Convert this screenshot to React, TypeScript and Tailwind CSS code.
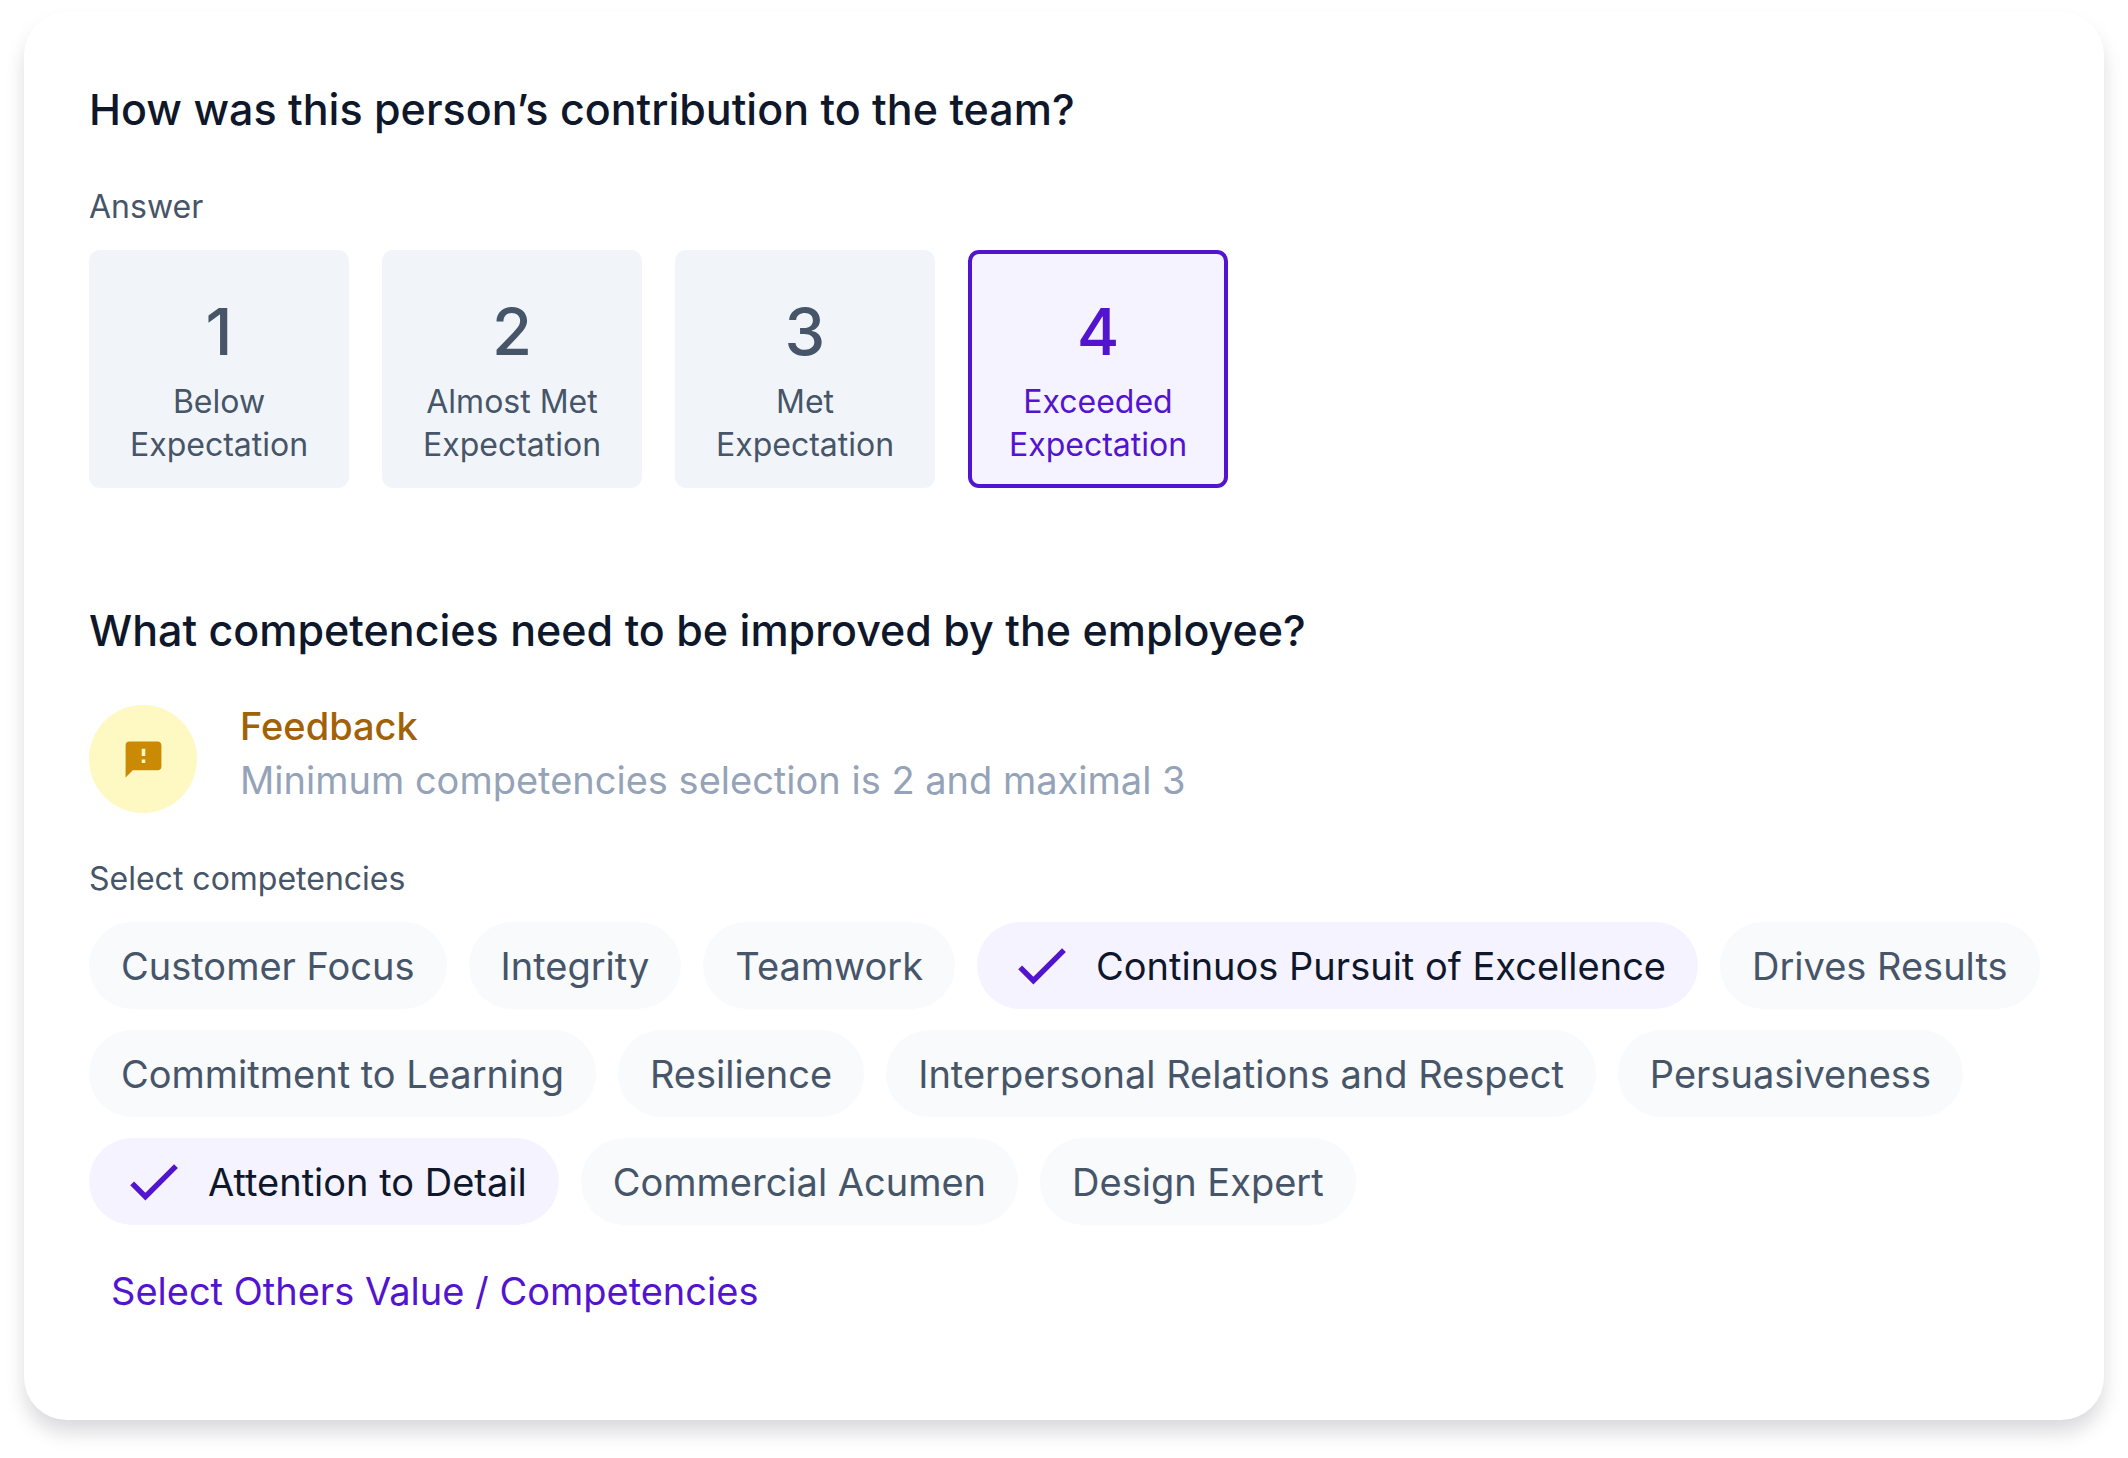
import { useState } from "react";
import { clsx } from "clsx";
import { MdCheck, MdFeedback } from "react-icons/md";

interface Rating {
  value: number;
  lines: [string, string];
}

const RATINGS: Rating[] = [
  { value: 1, lines: ["Below", "Expectation"] },
  { value: 2, lines: ["Almost Met", "Expectation"] },
  { value: 3, lines: ["Met", "Expectation"] },
  { value: 4, lines: ["Exceeded", "Expectation"] },
];

const COMPETENCIES = [
  "Customer Focus",
  "Integrity",
  "Teamwork",
  "Continuos Pursuit of Excellence",
  "Drives Results",
  "Commitment to Learning",
  "Resilience",
  "Interpersonal Relations and Respect",
  "Persuasiveness",
  "Attention to Detail",
  "Commercial Acumen",
  "Design Expert",
];

const MAX_SELECTION = 3;

function RatingTile({ rating, active, onSelect }: { rating: Rating; active: boolean; onSelect: () => void }) {
  return (
    <button
      type="button"
      aria-pressed={active}
      onClick={onSelect}
      className={clsx(
        "w-[260px] rounded-[11px] border-4 pt-[34px] pb-[18px] text-center",
        active
          ? "border-[#5314d0] bg-violet-50 text-[#5314d0]"
          : "border-[#f1f5f9] bg-[#f1f5f9] text-[#475569]"
      )}
    >
      <span className="block text-[65px] leading-[88px] font-medium">{rating.value}</span>
      <span className="mt-1 block text-[32px] leading-[43px]">
        {rating.lines[0]}
        <br />
        {rating.lines[1]}
      </span>
    </button>
  );
}

function CompetencyChip({ label, active, onToggle }: { label: string; active: boolean; onToggle: () => void }) {
  return (
    <button
      type="button"
      aria-pressed={active}
      onClick={onToggle}
      className={clsx(
        "flex h-[87px] items-center gap-[22px] rounded-full px-[32px] text-[38px] leading-[54px]",
        active ? "bg-violet-50 text-[#0f172a]" : "bg-[#f8fafc] text-[#475569]"
      )}
    >
      {active && <MdCheck className="size-[65px] text-[#5314d0]" />}
      {label}
    </button>
  );
}

export default function App() {
  const [rating, setRating] = useState(4);
  const [selected, setSelected] = useState<string[]>([
    "Continuos Pursuit of Excellence",
    "Attention to Detail",
  ]);

  function toggle(label: string) {
    setSelected((prev) => {
      if (prev.includes(label)) return prev.filter((item) => item !== label);
      if (prev.length >= MAX_SELECTION) return prev;
      return [...prev, label];
    });
  }

  return (
    <main className="bg-white px-6 pt-3 pb-[38px] font-['Inter',sans-serif] [font-optical-sizing:none]">
      <div className="rounded-[43px] bg-white pt-[65px] pr-14 pb-[86px] pl-[65px] shadow-[0_13px_20px_-1px_rgba(15,15,30,0.155)]">
        <section>
          <h2 className="text-[43px] leading-[65px] font-medium text-[#0f172a]">
            How was this person’s contribution to the team?
          </h2>
          <p className="mt-[43px] text-[32px] leading-[43px] text-[#475569]">Answer</p>
          <div className="mt-[22px] flex flex-wrap gap-[33px]">
            {RATINGS.map((item) => (
              <RatingTile
                key={item.value}
                rating={item}
                active={item.value === rating}
                onSelect={() => setRating(item.value)}
              />
            ))}
          </div>
        </section>

        <section className="mt-[110px]">
          <h2 className="text-[43px] leading-[65px] font-medium text-[#0f172a]">
            What competencies need to be improved by the employee?
          </h2>

          <div className="mt-9 flex items-center gap-[43px]">
            <div className="flex size-[108px] shrink-0 items-center justify-center rounded-full bg-[#fef9c3]">
              <MdFeedback className="size-[43px] text-[#ca8a04]" />
            </div>
            <div className="pb-3 text-[38px] leading-[54px]">
              <p className="font-medium text-[#a16207]">Feedback</p>
              <p className="text-[#94a3b8]">Minimum competencies selection is 2 and maximal 3</p>
            </div>
          </div>

          <p className="mt-[38px] text-[32px] leading-[43px] text-[#475569]">Select competencies</p>
          <div className="mt-[22px] flex flex-wrap gap-x-[22px] gap-y-[21px]">
            {COMPETENCIES.map((label) => (
              <CompetencyChip
                key={label}
                label={label}
                active={selected.includes(label)}
                onToggle={() => toggle(label)}
              />
            ))}
          </div>
          <a
            href="#competencies"
            className="mt-[22px] flex h-[87px] w-fit items-center px-[22px] text-[38px] leading-[54px] text-[#5314d0]"
          >
            Select Others Value / Competencies
          </a>
        </section>
      </div>
    </main>
  );
}
